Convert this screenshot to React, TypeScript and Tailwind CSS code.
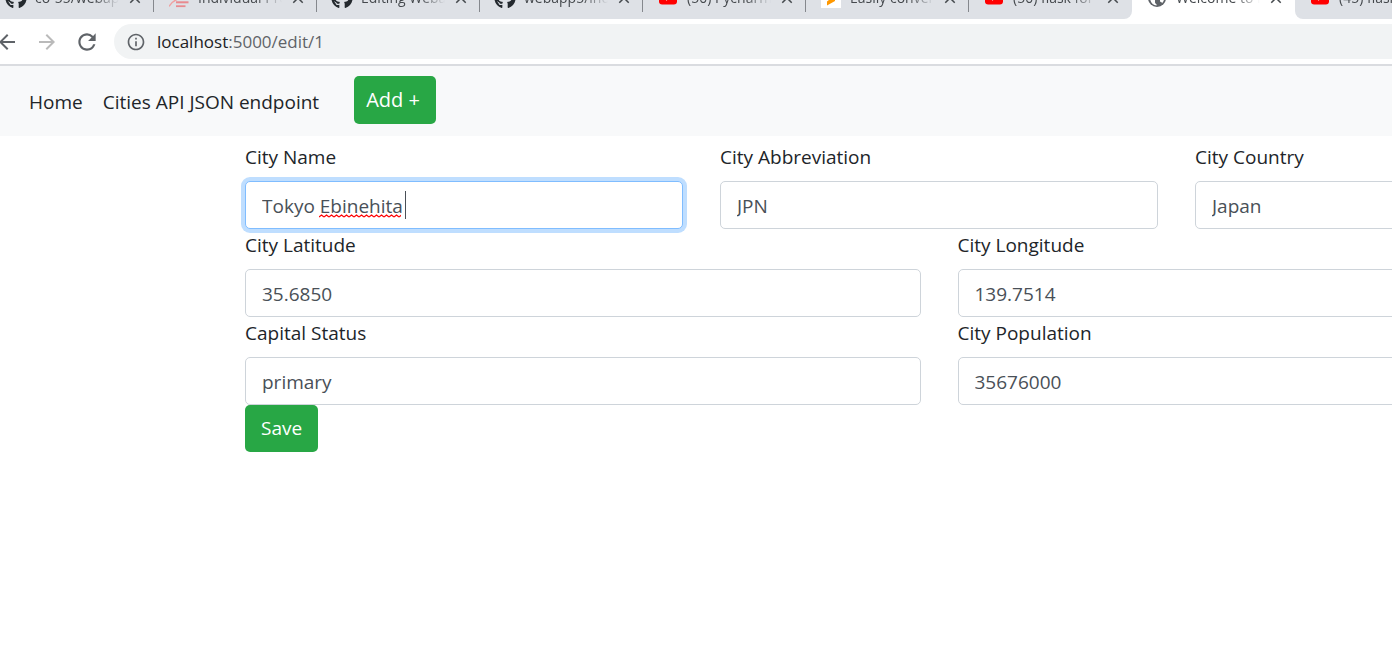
import { useState } from "react";
import type { ReactNode } from "react";
import { FaGithub } from "react-icons/fa";
import { MdArrowBack, MdArrowForward, MdClose, MdInfoOutline, MdRefresh } from "react-icons/md";

function YoutubeIcon() {
  return (
    <svg viewBox="0 0 20 20" className="size-5" aria-hidden="true">
      <rect x="1" y="3" width="18" height="13.5" rx="3.2" fill="#ff0000" />
      <path d="M8 6.8v6l5.2-3z" fill="#fff" />
    </svg>
  );
}

function DocumentIcon() {
  return (
    <svg viewBox="0 0 20 20" className="size-5" aria-hidden="true">
      <path d="M0 18.5C2 15 5 12.5 9 11L12 3" stroke="#f0a0a0" strokeWidth="1.4" fill="none" />
      <path d="M7 14.3h12.5" stroke="#e88a8f" strokeWidth="2" />
      <path d="M7 18.2h9.5" stroke="#e88a8f" strokeWidth="1.8" />
    </svg>
  );
}

function ConvertIcon() {
  return (
    <svg viewBox="0 0 20 20" className="size-5" aria-hidden="true">
      <rect width="20" height="20" fill="#fff" />
      <path d="M6 4l8 4v5l-8 4.5v-4l4.5-3.5L6 8z" fill="#ff9800" />
    </svg>
  );
}

function GlobeIcon() {
  return (
    <svg viewBox="0 0 20 20" className="size-5" aria-hidden="true">
      <circle cx="10" cy="10" r="9" fill="#5f6368" />
      <path d="M3 8l5 4v2.2c0 1 1 1.4 1.6 2.2v1c-4-.2-7-3.400-6.600-9.400z" fill="#fff" />
      <path d="M12.500 3.200c3 1 4.800 4 4.700 7-.1 2.200-.9 3.800-2.200 5-.3-1-1-1.400-2-1.400v-2.300c0-.6-.4-1-1-1H8.500V8.500h1.800c.6 0 1-.4 1-1V6h1.200z" fill="#fff" />
    </svg>
  );
}

const github = <FaGithub className="size-[22px] shrink-0 text-[#24292e]" />;

const tabs: { title: string; icon: ReactNode; active?: boolean; line?: boolean }[] = [
  { title: "co-55/webapps", icon: github, line: true },
  { title: "Individual Project", icon: <DocumentIcon />, line: true },
  { title: "Editing Webapps", icon: github, line: true },
  { title: "webapp5/index", icon: github, line: true },
  { title: "(50) Pycharm tutorial", icon: <YoutubeIcon />, line: true },
  { title: "Easily convert files", icon: <ConvertIcon />, line: true },
  { title: "(50) flask for web", icon: <YoutubeIcon /> },
  { title: "Welcome to Flask", icon: <GlobeIcon />, active: true },
  { title: "(45) flask web app", icon: <YoutubeIcon /> },
];

function TabStrip() {
  return (
    <div className="flex h-[19px] items-end overflow-hidden bg-white">
      <div className="-ml-[9px] flex h-[42px] shrink-0">
        {tabs.map((tab, i) => (
          <div
            key={i}
            className={`flex w-[163px] shrink-0 items-center pl-[15px] ${
              tab.active ? "bg-white" : "bg-[#dee1e6]"
            } ${i === 6 ? "rounded-br-lg" : ""} ${i === 8 ? "rounded-bl-lg" : ""}`}
          >
            <span className="flex w-5 shrink-0 justify-center">{tab.icon}</span>
            <span className="ml-[9px] w-[84px] shrink-0 overflow-hidden whitespace-nowrap text-sm text-[#45494d] [mask-image:linear-gradient(to_right,black_70%,transparent)]">
              {tab.title}
            </span>
            <button aria-label={`Close ${tab.title}`} className="ml-2 flex size-4 items-center justify-center text-[#45494d]">
              <MdClose className="size-[18px] shrink-0" />
            </button>
            {tab.line && <span className="ml-auto h-7 w-px self-center bg-[#85888d]" />}
          </div>
        ))}
      </div>
    </div>
  );
}

function Toolbar() {
  return (
    <div className="flex h-[47px] items-center overflow-hidden border-b-2 border-[#dadce0] bg-white text-[#5f6368]">
      <button aria-label="Back" className="-ml-[5px] shrink-0">
        <MdArrowBack className="size-6" />
      </button>
      <button aria-label="Forward" className="ml-4 shrink-0 text-[#bababa]">
        <MdArrowForward className="size-6" />
      </button>
      <button aria-label="Reload" className="ml-[15px] shrink-0">
        <MdRefresh className="size-[26px]" />
      </button>
      <div className="ml-[14px] flex h-[35px] flex-1 items-center rounded-l-full bg-[#f1f3f4] pl-3">
        <MdInfoOutline className="size-5 shrink-0" />
        <span className="ml-[11px] text-[17px]">
          <span className="text-[#202124]">localhost</span>:5000/edit/1
        </span>
      </div>
    </div>
  );
}

function Navbar() {
  return (
    <nav className="flex h-[70px] items-start bg-[#f8f9fa] px-[29px] pt-[10px] text-[19px] leading-[52px] text-[#212529]">
      <a href="#home">Home</a>
      <a href="#cities" className="ml-5">
        Cities API JSON endpoint
      </a>
      <button className="ml-[35px] h-12 rounded-[5px] bg-[#28a745] pl-3 pr-4 text-xl text-white">Add +</button>
    </nav>
  );
}

type FieldProps = { id: string; label: string; initial: string; focused?: boolean };

function Field({ id, label, initial, focused }: FieldProps) {
  const [value, setValue] = useState(initial);
  return (
    <div className="min-w-0 flex-1">
      <label htmlFor={id} className="mb-2 block leading-8">
        {label}
      </label>
      <div className="relative">
        <input
          id={id}
          value={value}
          onChange={(e) => setValue(e.target.value)}
          className={`block h-12 w-full rounded-[5px] border bg-white px-4 pt-[2px] text-[#495057] outline-none ${
            focused ? "border-[#80bdff] ring-4 ring-[#bfdeff]" : "border-[#ced4da]"
          }`}
        />
        {focused && (
          <>
            <svg className="absolute left-[74px] top-[33px] h-1 w-[82px]" aria-hidden="true">
              <defs>
                <pattern id="wave" width="5" height="4" patternUnits="userSpaceOnUse">
                  <path d="M0 3L2.5 1L5 3" fill="none" stroke="#f00" strokeWidth="1.2" />
                </pattern>
              </defs>
              <rect width="82" height="4" fill="url(#wave)" />
            </svg>
            <span className="absolute left-40 top-[10px] h-7 w-px bg-[#495057]" />
          </>
        )}
      </div>
    </div>
  );
}

export default function App() {
  return (
    <div className="min-h-screen overflow-hidden bg-white font-['Open_Sans','Noto_Sans',sans-serif]">
      <TabStrip />
      <Toolbar />
      <Navbar />
      <main className="overflow-hidden pb-6 pl-[245px] text-[19px] text-[#212529]">
        <form className="w-[calc(100vw-4px)] pt-[5px]" onSubmit={(e) => e.preventDefault()}>
          <div className="flex gap-[37px]">
            <Field id="name" label="City Name" initial="Tokyo Ebinehita " focused />
            <Field id="abbreviation" label="City Abbreviation" initial="JPN" />
            <Field id="country" label="City Country" initial="Japan" />
          </div>
          <div className="flex gap-[37px]">
            <Field id="latitude" label="City Latitude" initial="35.6850" />
            <Field id="longitude" label="City Longitude" initial="139.7514" />
          </div>
          <div className="flex gap-[37px]">
            <Field id="status" label="Capital Status" initial="primary" />
            <Field id="population" label="City Population" initial="35676000" />
          </div>
          <button className="block h-[47px] rounded-[5px] bg-[#28a745] px-4 text-white">Save</button>
        </form>
      </main>
    </div>
  );
}
